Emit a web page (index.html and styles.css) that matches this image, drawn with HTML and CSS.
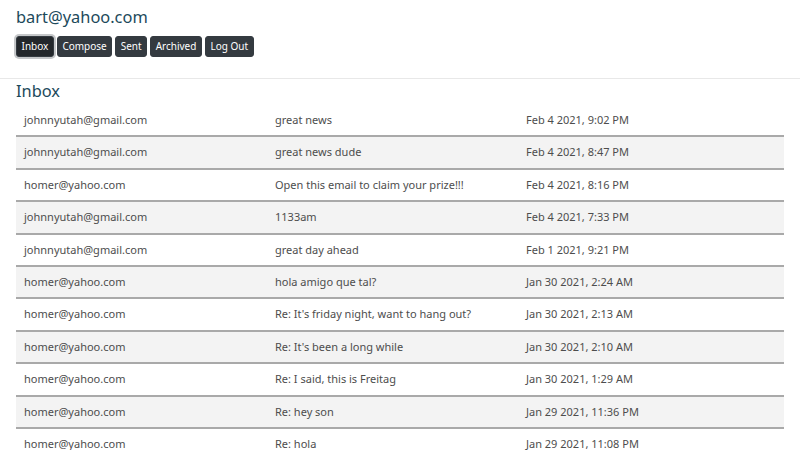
FILE: index.html
```html
<!DOCTYPE html>
<html>
<head>
<meta charset="utf-8">
<link rel="stylesheet" href="styles.css">
</head>
<body>
<header class="top">
  <h1 class="user">bart@yahoo.com</h1>
  <nav class="nav">
    <button class="btn active">Inbox</button>
    <button class="btn">Compose</button>
    <button class="btn">Sent</button>
    <button class="btn">Archived</button>
    <button class="btn">Log Out</button>
  </nav>
</header>
<main class="content">
  <h2 class="title">Inbox</h2>
  <table class="mail">
    <tr><td>johnnyutah@gmail.com</td><td>great news</td><td>Feb 4 2021, 9:02 PM</td></tr>
    <tr><td>johnnyutah@gmail.com</td><td>great news dude</td><td>Feb 4 2021, 8:47 PM</td></tr>
    <tr><td>homer@yahoo.com</td><td>Open this email to claim your prize!!!</td><td>Feb 4 2021, 8:16 PM</td></tr>
    <tr><td>johnnyutah@gmail.com</td><td>1133am</td><td>Feb 4 2021, 7:33 PM</td></tr>
    <tr><td>johnnyutah@gmail.com</td><td>great day ahead</td><td>Feb 1 2021, 9:21 PM</td></tr>
    <tr><td>homer@yahoo.com</td><td>hola amigo que tal?</td><td>Jan 30 2021, 2:24 AM</td></tr>
    <tr><td>homer@yahoo.com</td><td>Re: It's friday night, want to hang out?</td><td>Jan 30 2021, 2:13 AM</td></tr>
    <tr><td>homer@yahoo.com</td><td>Re: It's been a long while</td><td>Jan 30 2021, 2:10 AM</td></tr>
    <tr><td>homer@yahoo.com</td><td>Re: I said, this is Freitag</td><td>Jan 30 2021, 1:29 AM</td></tr>
    <tr><td>homer@yahoo.com</td><td>Re: hey son</td><td>Jan 29 2021, 11:36 PM</td></tr>
    <tr><td>homer@yahoo.com</td><td>Re: hola</td><td>Jan 29 2021, 11:08 PM</td></tr>
  </table>
</main>
</body>
</html>
```
FILE: styles.css
```css
html, body {
  margin: 0;
  padding: 0;
  background: #fff;
  font-family: "Noto Sans", "Open Sans", sans-serif;
}
.top {
  padding: 6px 16px 0;
  height: 72px;
  border-bottom: 1px solid #e8e8e8;
}
.user {
  margin: 0;
  font-size: 16.4px;
  font-weight: 400;
  line-height: 22px;
  color: #1d4a5b;
}
.nav {
  display: flex;
  gap: 3px;
  margin-top: 8px;
}
.btn {
  font-family: inherit;
  font-size: 10px;
  line-height: 15px;
  color: #fff;
  background: #343a40;
  border: 1px solid #343a40;
  border-radius: 3px;
  padding: 2px 4.5px;
  margin: 0;
}
.btn.active {
  background: #23272b;
  box-shadow: 0 0 0 2px #c5c7c9;
}
.content {
  padding: 0 16px;
}
.title {
  margin: 0;
  padding-top: 1px;
  font-size: 16.4px;
  font-weight: 400;
  line-height: 22px;
  color: #1d4a5b;
}
.mail {
  width: 768px;
  margin-top: 3px;
  border-collapse: collapse;
  font-size: 11px;
  color: #4d4d4d;
}
.mail td {
  padding: 7px 8px;
  line-height: 16.4px;
  border-bottom: 2px solid #a9a9a9;
  white-space: nowrap;
}
.mail td:nth-child(1) { width: 235px; }
.mail td:nth-child(2) { width: 235px; }
.mail tr:nth-child(even) td { background: #f3f3f3; }
```
